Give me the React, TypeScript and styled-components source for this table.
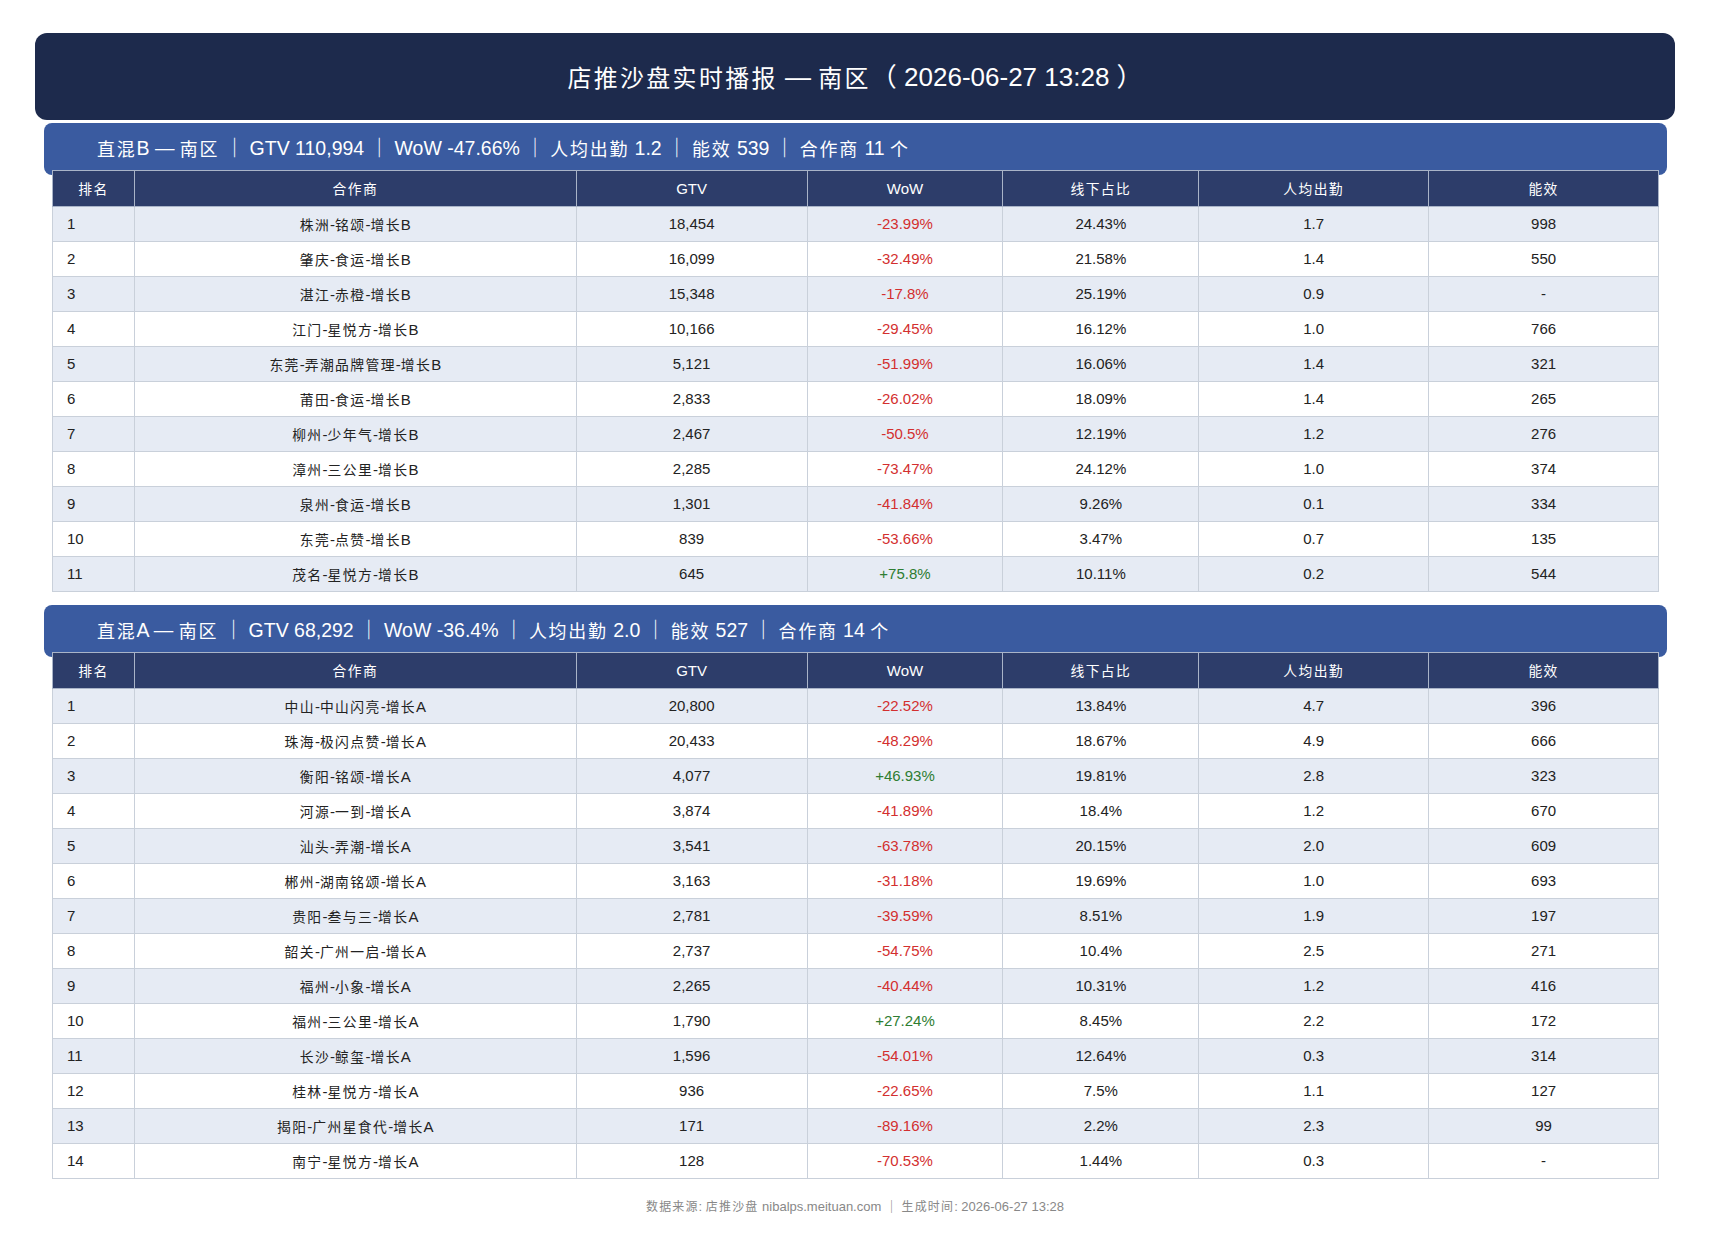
import styled, { createGlobalStyle } from "styled-components";

const GlobalStyle = createGlobalStyle`
  body {
    margin: 0;
    background: #ffffff;
    font-family: "Liberation Sans", Arial, "Noto Sans CJK SC", sans-serif;
  }
`;

type Row = [string, string, string, string, string, string];

const groupB: Row[] = [
  ["株洲-铭颂-增长B", "18,454", "-23.99%", "24.43%", "1.7", "998"],
  ["肇庆-食运-增长B", "16,099", "-32.49%", "21.58%", "1.4", "550"],
  ["湛江-赤橙-增长B", "15,348", "-17.8%", "25.19%", "0.9", "-"],
  ["江门-星悦方-增长B", "10,166", "-29.45%", "16.12%", "1.0", "766"],
  ["东莞-弄潮品牌管理-增长B", "5,121", "-51.99%", "16.06%", "1.4", "321"],
  ["莆田-食运-增长B", "2,833", "-26.02%", "18.09%", "1.4", "265"],
  ["柳州-少年气-增长B", "2,467", "-50.5%", "12.19%", "1.2", "276"],
  ["漳州-三公里-增长B", "2,285", "-73.47%", "24.12%", "1.0", "374"],
  ["泉州-食运-增长B", "1,301", "-41.84%", "9.26%", "0.1", "334"],
  ["东莞-点赞-增长B", "839", "-53.66%", "3.47%", "0.7", "135"],
  ["茂名-星悦方-增长B", "645", "+75.8%", "10.11%", "0.2", "544"],
];

const groupA: Row[] = [
  ["中山-中山闪亮-增长A", "20,800", "-22.52%", "13.84%", "4.7", "396"],
  ["珠海-极闪点赞-增长A", "20,433", "-48.29%", "18.67%", "4.9", "666"],
  ["衡阳-铭颂-增长A", "4,077", "+46.93%", "19.81%", "2.8", "323"],
  ["河源-一到-增长A", "3,874", "-41.89%", "18.4%", "1.2", "670"],
  ["汕头-弄潮-增长A", "3,541", "-63.78%", "20.15%", "2.0", "609"],
  ["郴州-湖南铭颂-增长A", "3,163", "-31.18%", "19.69%", "1.0", "693"],
  ["贵阳-叁与三-增长A", "2,781", "-39.59%", "8.51%", "1.9", "197"],
  ["韶关-广州一启-增长A", "2,737", "-54.75%", "10.4%", "2.5", "271"],
  ["福州-小象-增长A", "2,265", "-40.44%", "10.31%", "1.2", "416"],
  ["福州-三公里-增长A", "1,790", "+27.24%", "8.45%", "2.2", "172"],
  ["长沙-鲸玺-增长A", "1,596", "-54.01%", "12.64%", "0.3", "314"],
  ["桂林-星悦方-增长A", "936", "-22.65%", "7.5%", "1.1", "127"],
  ["揭阳-广州星食代-增长A", "171", "-89.16%", "2.2%", "2.3", "99"],
  ["南宁-星悦方-增长A", "128", "-70.53%", "1.44%", "0.3", "-"],
];

const columns = [
  { label: "排名", width: 82 },
  { label: "合作商", width: 442 },
  { label: "GTV", width: 231 },
  { label: "WoW", width: 196 },
  { label: "线下占比", width: 196 },
  { label: "人均出勤", width: 230 },
  { label: "能效", width: 230 },
];

// ideographs sit a little smaller and airier than the latin text around them
const Han = styled.span`
  font-family: "Noto Sans CJK SC", sans-serif;
  font-size: 0.92em;
  letter-spacing: 0.1em;
`;

function Mixed({ text }: { text: string }) {
  const parts = text.split(/([\u4e00-\u9fff]+)/);
  return (
    <>
      {parts.map((p, i) => (i % 2 === 1 ? <Han key={i}>{p}</Han> : p))}
    </>
  );
}

const Page = styled.div`
  padding: 33px 34px 30px 35px;
  display: flex;
  flex-direction: column;
`;

const TitleBar = styled.div`
  height: 87px;
  display: flex;
  align-items: center;
  justify-content: center;
  background: #1d2a4c;
  border-radius: 12px;
  color: #ffffff;
  font-size: 26px;
  line-height: 30px;
  white-space: pre;
  margin-bottom: 3px;
`;

const Section = styled.section`
  display: flex;
  flex-direction: column;
  margin: 0 8px 13px 9px;
`;

const Banner = styled.div`
  height: 52px;
  display: flex;
  align-items: center;
  padding: 0 0 2px 53px;
  box-sizing: border-box;
  background: #3a5ba0;
  border-radius: 8px;
  color: #ffffff;
  font-size: 19.5px;
  line-height: 24px;
  white-space: pre;
`;

const Table = styled.table`
  margin: -5px 8px 0 8px;
  border-collapse: collapse;
  table-layout: fixed;
  position: relative;
  font-size: 15px;
  line-height: 16px;
  color: #222222;
`;

const HeadCell = styled.th`
  height: 35px;
  padding: 0;
  background: #2d3d6a;
  color: #ffffff;
  font-weight: normal;
  text-align: center;
  border: 1px solid #a9b4c8;
`;

const BodyRow = styled.tr<{ $striped: boolean }>`
  height: 35px;
  background: ${(p) => (p.$striped ? "#e6ebf4" : "#ffffff")};
`;

const Cell = styled.td<{ $tone?: "up" | "down"; $left?: boolean }>`
  padding: 0 ${(p) => (p.$left ? "14px" : "6px")};
  text-align: ${(p) => (p.$left ? "left" : "center")};
  border: 1px solid #c9d0da;
  color: ${(p) =>
    p.$tone === "up" ? "#2e7d32" : p.$tone === "down" ? "#d32f2f" : "#222222"};
`;

const Footer = styled.div`
  margin-top: 6px;
  text-align: center;
  font-size: 13px;
  line-height: 16px;
  color: #888888;
`;

function DataTable({ rows }: { rows: Row[] }) {
  return (
    <Table>
      <colgroup>
        {columns.map((c) => (
          <col key={c.label} style={{ width: c.width }} />
        ))}
      </colgroup>
      <thead>
        <tr>
          {columns.map((c) => (
            <HeadCell key={c.label}>
              <Mixed text={c.label} />
            </HeadCell>
          ))}
        </tr>
      </thead>
      <tbody>
        {rows.map((r, i) => (
          <BodyRow key={r[0]} $striped={i % 2 === 0}>
            <Cell $left>{i + 1}</Cell>
            <Cell>
              <Mixed text={r[0]} />
            </Cell>
            <Cell>{r[1]}</Cell>
            <Cell $tone={r[2].startsWith("+") ? "up" : "down"}>{r[2]}</Cell>
            <Cell>{r[3]}</Cell>
            <Cell>{r[4]}</Cell>
            <Cell>{r[5]}</Cell>
          </BodyRow>
        ))}
      </tbody>
    </Table>
  );
}

export default function App() {
  return (
    <Page>
      <GlobalStyle />
      <TitleBar>
        <Mixed text="店推沙盘实时播报 — 南区（ 2026-06-27 13:28 ）" />
      </TitleBar>
      <Section>
        <Banner>
          <Mixed text="直混B — 南区 ｜ GTV 110,994 ｜ WoW -47.66% ｜ 人均出勤 1.2 ｜ 能效 539 ｜ 合作商 11 个" />
        </Banner>
        <DataTable rows={groupB} />
      </Section>
      <Section>
        <Banner>
          <Mixed text="直混A — 南区 ｜ GTV 68,292 ｜ WoW -36.4% ｜ 人均出勤 2.0 ｜ 能效 527 ｜ 合作商 14 个" />
        </Banner>
        <DataTable rows={groupA} />
      </Section>
      <Footer>
        <Mixed text="数据来源: 店推沙盘 nibalps.meituan.com ｜ 生成时间: 2026-06-27 13:28" />
      </Footer>
    </Page>
  );
}
